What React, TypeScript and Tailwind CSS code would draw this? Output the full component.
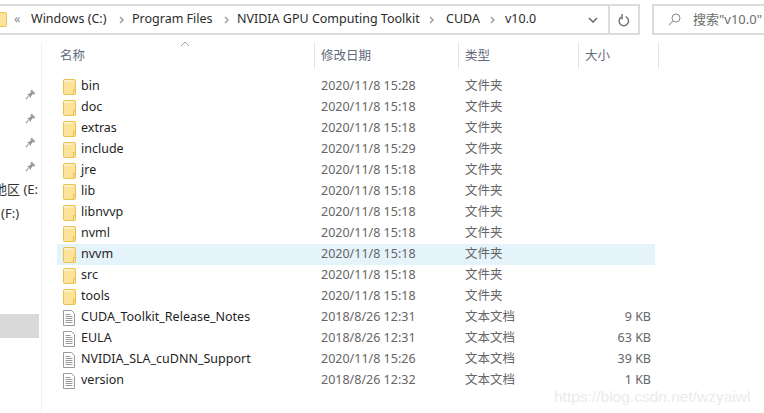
import React from 'react';

const FONT = "font-['Noto_Sans','Noto_Sans_CJK_SC',sans-serif]";

type Row = { name: string; date: string; type: string; size?: string; file?: boolean; active?: boolean };

const ROWS: Row[] = [
  { name: 'bin', date: '2020/11/8 15:28', type: '文件夹' },
  { name: 'doc', date: '2020/11/8 15:18', type: '文件夹' },
  { name: 'extras', date: '2020/11/8 15:18', type: '文件夹' },
  { name: 'include', date: '2020/11/8 15:29', type: '文件夹' },
  { name: 'jre', date: '2020/11/8 15:18', type: '文件夹' },
  { name: 'lib', date: '2020/11/8 15:18', type: '文件夹' },
  { name: 'libnvvp', date: '2020/11/8 15:18', type: '文件夹' },
  { name: 'nvml', date: '2020/11/8 15:18', type: '文件夹' },
  { name: 'nvvm', date: '2020/11/8 15:18', type: '文件夹', active: true },
  { name: 'src', date: '2020/11/8 15:18', type: '文件夹' },
  { name: 'tools', date: '2020/11/8 15:18', type: '文件夹' },
  { name: 'CUDA_Toolkit_Release_Notes', date: '2018/8/26 12:31', type: '文本文档', size: '9 KB', file: true },
  { name: 'EULA', date: '2018/8/26 12:31', type: '文本文档', size: '63 KB', file: true },
  { name: 'NVIDIA_SLA_cuDNN_Support', date: '2020/11/8 15:26', type: '文本文档', size: '39 KB', file: true },
  { name: 'version', date: '2018/8/26 12:32', type: '文本文档', size: '1 KB', file: true },
];

const Folder = () => (
  <svg width="13" height="16" viewBox="0 0 13 16" className="shrink-0">
    <path d="M0.5 1.5a1 1 0 0 1 1-1h10a1 1 0 0 1 1 1v13a1 1 0 0 1-1 1h-10a1 1 0 0 1-1-1z" fill="#fde39a" stroke="#e8c14f" />
    <path d="M10.5 15v-4.5h2" fill="none" stroke="#e8c14f" />
    <rect x="1" y="1" width="9" height="2" fill="#fef0c4" />
  </svg>
);

const FileIcon = () => (
  <svg width="12" height="16" viewBox="0 0 12 16" className="shrink-0">
    <path d="M0.5 0.5h8l3 3v12h-11z" fill="#fff" stroke="#999" />
    <path d="M2.5 4.5h5M2.5 6.5h7M2.5 8.5h7M2.5 10.5h7M2.5 12.5h7" stroke="#999" />
  </svg>
);

const Pin = () => (
  <svg width="11" height="11" viewBox="0 0 11 11">
    <path d="M6.5 0.5 10.5 4.5 9.3 5.2 7.8 5.2 6 7.2 6 9 2 5 3.8 5 5.8 3.2 5.8 1.7z" fill="#9a9a9a" />
    <path d="M3.6 7.4 0.8 10.2" stroke="#9a9a9a" strokeWidth="1.2" />
  </svg>
);

const Chevron = () => (
  <svg width="5" height="8" viewBox="0 0 5 8" className="shrink-0">
    <path d="M1 1l3 3-3 3" fill="none" stroke="#9a9a9a" strokeWidth="1.4" />
  </svg>
);

const Crumb = ({ label, className }: { label: string; className: string }) => (
  <span className={`shrink-0 whitespace-nowrap ${className}`}>{label}</span>
);

const AddressBar = () => (
  <div className="flex h-[38px] shrink-0 items-start pt-1">
    <div className="flex h-[31px] w-[640px] shrink-0 items-center border-y-2 border-r-2 border-[#dcdcdc] text-[12.5px] text-[#2b2b2b]">
      <div className="h-[15px] w-[7px] shrink-0 rounded-r-[2px] border-y border-r border-[#e8c14f] bg-[#fde39a]" />
      <span className="ml-[7px] w-[10px] shrink-0 leading-none text-[#8a8a8a]">«</span>
      <Crumb label="Windows (C:)" className="ml-[7px] w-[88px]" />
      <Chevron />
      <Crumb label="Program Files" className="ml-[8px] w-[92px]" />
      <Chevron />
      <Crumb label="NVIDIA GPU Computing Toolkit" className="ml-[8px] w-[192px]" />
      <Chevron />
      <Crumb label="CUDA" className="ml-[12px] w-[44px]" />
      <Chevron />
      <Crumb label="v10.0" className="ml-[10px] w-[83px]" />
      <svg width="10" height="6" viewBox="0 0 10 6" className="shrink-0">
        <path d="M1 1l4 4 4-4" fill="none" stroke="#6f6f6f" strokeWidth="1.6" />
      </svg>
      <div className="ml-[10px] flex h-full flex-1 items-center justify-center border-l-2 border-[#dcdcdc]">
        <svg width="12" height="14" viewBox="0 0 12 14">
          <path d="M7.5 3.6A4.7 4.7 0 1 1 3 4.2" fill="none" stroke="#777" strokeWidth="1.5" />
          <path d="M4 1v4.5h-1" fill="none" stroke="#777" strokeWidth="1.5" />
        </svg>
      </div>
    </div>
    <div className="ml-3 flex h-[31px] flex-1 items-center border-y-2 border-l-2 border-[#dcdcdc] pl-[14px] text-[13px] text-[#6d6d6d]">
      <svg width="13" height="13" viewBox="0 0 13 13" className="shrink-0">
        <circle cx="8" cy="5" r="4" fill="none" stroke="#8c8c8c" />
        <path d="M5 8 1 12" stroke="#c9a98a" strokeWidth="1.2" />
      </svg>
      <span className="ml-[12px] whitespace-nowrap">搜索"v10.0"</span>
    </div>
  </div>
);

const Sidebar = () => (
  <div className="flex w-[42px] shrink-0 flex-col overflow-hidden border-r border-[#f0f0f0] text-[13px] text-[#333]">
    <div className="h-[40px] shrink-0" />
    {[0, 1, 2, 3].map((i) => (
      <div key={i} className="flex h-6 shrink-0 items-center pl-[25px]">
        <Pin />
      </div>
    ))}
    <div className="flex h-6 shrink-0 items-center justify-end whitespace-nowrap pr-[3px]">地区 (E:</div>
    <div className="flex h-6 shrink-0 items-center whitespace-nowrap pl-px">(F:)</div>
    <div className="h-[88px] shrink-0" />
    <div className="h-6 w-[39px] shrink-0 bg-[#d9d9d9]" />
  </div>
);

const HeaderCell = ({ label, className }: { label: string; className: string }) => (
  <div className={`flex h-[27px] shrink-0 items-center border-r border-[#e5e5e5] pt-px ${className}`}>{label}</div>
);

const FileRow = ({ row }: { row: Row }) => (
  <div className={`grid h-[21px] grid-cols-[264px_144px_120px_1fr] items-center ${row.active ? 'bg-[#e5f3fb]' : ''}`}>
    <div className="flex items-center pl-[6px] text-[#1f1f1f]">
      <div className="flex w-[18px] shrink-0">{row.file ? <FileIcon /> : <Folder />}</div>
      <span className="whitespace-nowrap">{row.name}</span>
    </div>
    <span className="whitespace-nowrap">{row.date}</span>
    <span className="whitespace-nowrap">{row.type}</span>
    <span className="whitespace-nowrap pr-[4px] text-right">{row.size}</span>
  </div>
);

export default function App() {
  return (
    <div className={`relative flex h-[413px] w-[764px] flex-col overflow-hidden bg-white ${FONT}`}>
      <AddressBar />
      <div className="flex flex-1 pt-[4px]">
        <Sidebar />
        <div className="ml-[15px] flex w-[598px] flex-col text-[12.5px] text-[#666]">
          <div className="flex h-[34px] shrink-0 text-[#5f6b7a]">
            <HeaderCell label="名称" className="w-[258px] pl-[3px]" />
            <HeaderCell label="修改日期" className="w-[144px] pl-[6px]" />
            <HeaderCell label="类型" className="w-[120px] pl-[6px]" />
            <HeaderCell label="大小" className="w-[80px] pl-[6px]" />
          </div>
          {ROWS.map((row) => (
            <FileRow key={row.name} row={row} />
          ))}
        </div>
      </div>
      <svg width="10" height="6" viewBox="0 0 10 6" className="absolute left-[180px] top-[41px]">
        <path d="M1 5l4-4 4 4" fill="none" stroke="#a0a0a0" />
      </svg>
      <span className="absolute left-[554px] top-[385px] whitespace-nowrap font-['Liberation_Sans',sans-serif] text-[15.5px] text-[#ebebeb]">
        https://blog.csdn.net/wzyaiwl
      </span>
    </div>
  );
}
